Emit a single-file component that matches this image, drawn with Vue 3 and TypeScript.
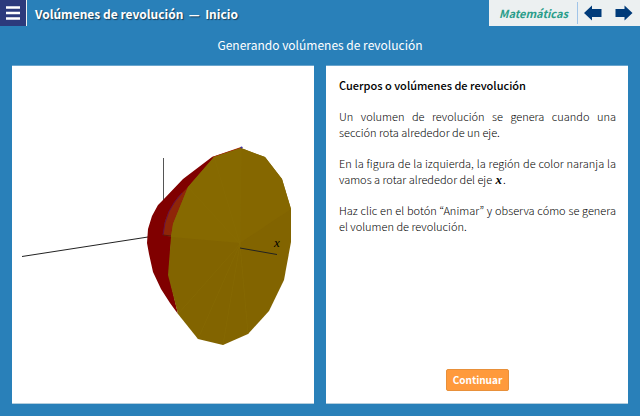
<script setup lang="ts">
interface Facet {
  points: string
  fill: string
}

const heading = 'Volúmenes de revolución\u00a0 —\u00a0 Inicio'
const subject = 'Matemáticas'

const facets: Facet[] = [
  { points: '212,157 243,147 241,149 215,158 195,184 176,210 172,228 169,275 178,314 170,303 161,289 153,272 149,254 147,243 148,229 152,216 158,205 163,200 183,179', fill: '#800000' },
  { points: '189,186 178,197 169,211 165,221 163,235 171,237 175,224', fill: '#8f2608' },
  { points: '212,157 241,147 241,149 214,158', fill: '#a22b0a' },
  { points: '241,148 265,157 282,179 291,209 291,242 284,280 269,311 248,334 223,345 198,339 178,314 168,275 171,237 173,224 188,187 214,157', fill: '#826400' },
  { points: '241,148 265,157 282,179 291,209 240,243', fill: '#856700' },
  { points: '240,243 171,237 173,224 188,187 214,157 241,148', fill: '#866900' },
]
</script>

<template>
  <div class="page" lang="es">
    <header class="topbar">
      <button class="menu" type="button" aria-label="Menú">
        <svg viewBox="0 0 14 14" aria-hidden="true">
          <path d="M0 1.5h14M0 7h14M0 12.5h14" />
        </svg>
      </button>
      <h1 class="title">{{ heading }}</h1>
      <nav class="nav">
        <span class="subject">{{ subject }}</span>
        <a class="arrow" href="#anterior" aria-label="Anterior">
          <svg viewBox="0 0 18 16" aria-hidden="true">
            <path d="M0 8 8 0.500V4H17.500V12H8V15.500Z" />
          </svg>
        </a>
        <a class="arrow" href="#siguiente" aria-label="Siguiente">
          <svg viewBox="0 0 18 16" aria-hidden="true">
            <path d="M17.500 8 9.500 0.500V4H0.500V12H9.500V15.500Z" />
          </svg>
        </a>
      </nav>
    </header>

    <h2 class="subtitle">Generando volúmenes de revolución</h2>

    <main class="panels">
      <section class="panel figure">
        <svg viewBox="12 66 302 338" role="img" aria-label="Volumen de revolución">
          <path class="axis" d="M22 256.500 148 237" />
          <path class="axis vertical" d="M163.500 158V203" />
          <polygon v-for="(f, i) in facets" :key="i" :points="f.points" :fill="f.fill" />
          <path class="curve" d="M182 193Q165 210 163 235" />
          <path class="axis hidden" d="M163 235 171 236" />
          <path class="seam" d="M241 149 240 244 214 157M240 244 188 187M240 244 178 314M240 244 198 339M240 244 223 345M240 244 248 334" />
          <path class="axis" d="M240 248 277 254.500" />
          <circle class="vertex" cx="241.500" cy="147.500" r="1" />
          <text class="label" x="274" y="247">x</text>
        </svg>
      </section>

      <section class="panel text">
        <h3>Cuerpos o volúmenes de revolución</h3>
        <p>Un volumen de revolución se genera cuando una sección rota alrededor de un eje.</p>
        <p>En la figura de la izquierda, la región de color naranja la vamos a rotar alrededor del eje <var>x</var>.</p>
        <p>Haz clic en el botón “Animar” y observa cómo se genera el volumen de revolución.</p>
        <button class="continue" type="button">Continuar</button>
      </section>
    </main>
  </div>
</template>

<style>
body {
  margin: 0;
  background: #2980b9;
}
</style>

<style scoped>
.page {
  display: flex;
  flex-direction: column;
  box-sizing: border-box;
  min-height: 100vh;
  background: #2980b9;
  font-family: "Noto Sans CJK KR", "Noto Sans", sans-serif;
  color: #000;
}

h1,
h2,
h3,
p {
  margin: 0;
}

.topbar {
  display: flex;
  height: 26px;
}

.menu {
  display: flex;
  align-items: center;
  justify-content: center;
  box-sizing: border-box;
  width: 27px;
  padding: 0;
  border: 0;
  border-right: 1px solid #ecf0f1;
  background: #2c3a7c;
}

.menu svg {
  width: 14px;
  height: 14px;
  fill: none;
  stroke: #fff;
  stroke-width: 2.4;
}

.title {
  flex: 1;
  padding-left: 8px;
  color: #fff;
  font-size: 12px;
  font-weight: 700;
  line-height: 28px;
  text-shadow: 1px 1px 1px #1a3c58;
}

.nav {
  display: flex;
  align-items: center;
  gap: 13px;
  padding: 0 7px 0 10px;
  background: #ecf0f1;
}

.subject {
  padding-right: 9px;
  margin-right: -7px;
  border-right: 1px solid #a0c4e8;
  color: #2a9d8a;
  font-size: 11px;
  font-style: italic;
  font-weight: 700;
  line-height: 22px;
}

.arrow {
  display: flex;
}

.arrow svg {
  width: 18px;
  height: 16px;
  fill: #003b7a;
}

.subtitle {
  padding-bottom: 2px;
  color: #fff;
  font-size: 12px;
  font-weight: 400;
  line-height: 38px;
  text-align: center;
}

.panels {
  display: grid;
  flex: 1;
  grid-template-columns: 1fr 1fr;
  gap: 12px;
  padding: 0 12px 12px;
}

.panel {
  display: flex;
  flex-direction: column;
  min-width: 0;
  background: #fff;
  box-shadow: 0 -1px #6aa5cd, inset 0 -1px #b4cedd;
}

.figure svg {
  width: 100%;
  height: 100%;
}

.axis {
  fill: none;
  stroke: #222;
  stroke-width: 1;
}

.vertical {
  stroke: #555;
}

.hidden {
  stroke: #5b1808;
}

.curve {
  fill: none;
  stroke: #651047;
}

.seam {
  fill: none;
  stroke: #896c05;
  stroke-width: 0.5;
}

.vertex {
  fill: #3838ae;
}

.label {
  font: italic 13px "Liberation Serif", serif;
}

.text {
  gap: 15px;
  padding: 11px 12px 13px 13px;
  font-size: 11px;
  font-weight: 300;
  line-height: 16px;
}

.text h3 {
  font-size: 11px;
  font-weight: 500;
}

.text p {
  text-align: justify;
}

.text var {
  padding: 0 1px;
  font: italic bold 13px/1 "Liberation Serif", serif;
}

.continue {
  align-self: center;
  margin-top: auto;
  padding: 0 6px;
  border: 1px solid #e8903a;
  border-radius: 2px;
  background: #ff9a3c;
  color: #fff;
  font: 700 10px/20px "Noto Sans CJK KR", "Noto Sans", sans-serif;
}
</style>
